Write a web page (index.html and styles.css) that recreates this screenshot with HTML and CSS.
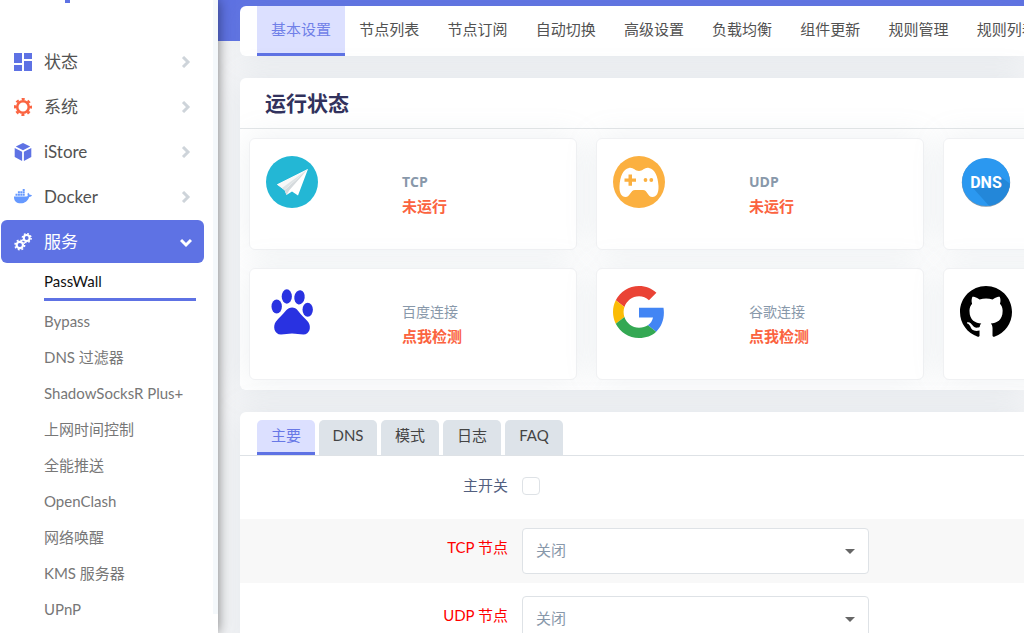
FILE: index.html
```html
<!DOCTYPE html>
<html lang="zh-CN">
<head>
<meta charset="utf-8">
<meta name="viewport" content="width=device-width, initial-scale=1">
<title>PassWall</title>
<link rel="stylesheet" href="styles.css">
</head>
<body>
<div class="app">
  <aside class="sidebar">
    <div class="brand"><span class="brand-mark"></span></div>
    <nav class="menu">
      <a class="menu-item" href="#">
        <svg class="menu-icon" viewBox="0 0 18 18" fill="#5e72e4"><path d="M0 0h8v10H0zM10 0h8v6h-8zM0 12h8v6H0zM10 8h8v10h-8z"/></svg>
        <span>状态</span>
        <svg class="arrow" viewBox="0 0 12 12"><path d="M3 1l5 5-5 5"/></svg>
      </a>
      <a class="menu-item" href="#">
        <svg class="menu-icon" viewBox="0 0 18 18" fill="none" stroke="#fb6340"><circle cx="9" cy="9" r="5.8" stroke-width="2.6"/><circle cx="9" cy="9" r="7.9" stroke-width="2.2" stroke-dasharray="3.1 3.1" stroke-dashoffset="1.55"/></svg>
        <span>系统</span>
        <svg class="arrow" viewBox="0 0 12 12"><path d="M3 1l5 5-5 5"/></svg>
      </a>
      <a class="menu-item" href="#">
        <svg class="menu-icon" viewBox="0 0 18 18" fill="#5e72e4"><path d="M9 0l7.2 3.6L9 7.2 1.8 3.6zM.7 5l7.4 3.8V18L.7 14zM17.300 5L9.900 8.800V18l7.400-4z"/></svg>
        <span>iStore</span>
        <svg class="arrow" viewBox="0 0 12 12"><path d="M3 1l5 5-5 5"/></svg>
      </a>
      <a class="menu-item" href="#">
        <svg class="menu-icon" viewBox="0 0 18 18" fill="#6699ff"><path d="M0 8.500h12.300c.8 0 1.300-.2 1.600-.5-.6-1.100-.5-2.300.2-3.200.9.500 1.400 1.200 1.500 2 .9-.2 1.800 0 2.400.5-.5 1.200-1.500 1.700-2.800 1.700C13.700 13 11 15.300 6.700 15.300 2.200 15.300-.2 13 0 8.500z"/><path d="M1.500 5.700h2v2h-2zM3.900 5.700h2v2h-2zM6.300 5.700h2v2h-2zM8.700 5.700h2v2h-2zM3.900 3.300h2v2h-2zM6.300 3.300h2v2h-2zM8.700 3.300h2v2h-2zM8.700 1h2v2h-2z"/></svg>
        <span>Docker</span>
        <svg class="arrow" viewBox="0 0 12 12"><path d="M3 1l5 5-5 5"/></svg>
      </a>
      <a class="menu-item menu-item-open" href="#">
        <svg class="menu-icon" viewBox="0 0 18 18" fill="none" stroke="#fff"><circle cx="5.800" cy="12" r="3.200" stroke-width="2.200"/><circle cx="5.800" cy="12" r="4.800" stroke-width="1.600" stroke-dasharray="1.900 1.870"/><circle cx="12.700" cy="5" r="2.900" stroke-width="2"/><circle cx="12.700" cy="5" r="4.400" stroke-width="1.500" stroke-dasharray="1.700 1.756"/></svg>
        <span>服务</span>
        <svg class="arrow" viewBox="0 0 12 12"><path d="M1 4l5 5 5-5"/></svg>
      </a>
      <ul class="submenu">
        <li><a class="current" href="#">PassWall</a></li>
        <li><a href="#">Bypass</a></li>
        <li><a href="#">DNS 过滤器</a></li>
        <li><a href="#">ShadowSocksR Plus+</a></li>
        <li><a href="#">上网时间控制</a></li>
        <li><a href="#">全能推送</a></li>
        <li><a href="#">OpenClash</a></li>
        <li><a href="#">网络唤醒</a></li>
        <li><a href="#">KMS 服务器</a></li>
        <li><a href="#">UPnP</a></li>
      </ul>
    </nav>
  </aside>

  <main class="main">
    <nav class="tabs">
      <a class="tab tab-active" href="#">基本设置</a>
      <a class="tab" href="#">节点列表</a>
      <a class="tab" href="#">节点订阅</a>
      <a class="tab" href="#">自动切换</a>
      <a class="tab" href="#">高级设置</a>
      <a class="tab" href="#">负载均衡</a>
      <a class="tab" href="#">组件更新</a>
      <a class="tab" href="#">规则管理</a>
      <a class="tab" href="#">规则列表</a>
    </nav>

    <section class="panel">
      <h3 class="panel-title">运行状态</h3>
      <div class="cards">
        <div class="card">
          <svg class="card-icon" viewBox="0 0 52 52"><circle cx="26" cy="26" r="26" fill="#23b7d5"/><path d="M42 13L11 28.500l7.500 5.500 2 5 5.500-3.500 6 4z" fill="#fff"/><path d="M42 13L18.500 34l2 5 3-5z" fill="#d5dadd"/><path d="M42 13L11 28.500l7.500 5.500z" fill="#f8f8f8"/><path d="M42 13L16 32l2.500 2z" fill="#dfe4e6"/></svg>
          <div class="card-text"><h4>TCP</h4><p>未运行</p></div>
        </div>
        <div class="card">
          <svg class="card-icon" viewBox="0 0 52 52"><circle cx="26" cy="26" r="26" fill="#fbb040"/><path d="M16 12c4-1 6 3 10 3s6-4 10-3c6 1 9 9 9.500 18 .3 7-2 11-6 11-5 0-5-7-9.500-7h-8c-4.500 0-5 7-9.500 7-4 0-6.300-4-6-11C7 21 10 13 16 12z" fill="#fff"/><path d="M15.500 18.500h3.500v4h4v3.300h-4v4h-3.500v-4h-4v-3.300h4z" fill="#fbb040"/><circle cx="32.500" cy="24" r="1.900" fill="#fbb040"/><circle cx="38.300" cy="24" r="1.900" fill="#fbb040"/></svg>
          <div class="card-text"><h4>UDP</h4><p>未运行</p></div>
        </div>
        <div class="card">
          <svg class="card-icon" viewBox="0 0 52 52"><defs><clipPath id="disc"><circle cx="26" cy="26" r="24"/></clipPath></defs><circle cx="26" cy="26.600" r="24.200" fill="#8598a8"/><circle cx="26" cy="26" r="24" fill="#2b98f0"/><path d="M13 32l18 20h22V30L40 20l-10 12z" fill="#2387d9" clip-path="url(#disc)"/><text x="26" y="32" text-anchor="middle" class="dns-text">DNS</text></svg>
        </div>
        <div class="card">
          <svg class="card-icon" viewBox="0 0 52 52" fill="#2932e1"><ellipse cx="10.700" cy="20.500" rx="5.200" ry="7"/><ellipse cx="20.800" cy="10.500" rx="5.100" ry="7.200"/><ellipse cx="33.500" cy="11.300" rx="5.200" ry="7.200" transform="rotate(8 33.500 11.300)"/><ellipse cx="41.700" cy="23.700" rx="5.200" ry="7"/><path d="M20 24.500c3.500-4 9-4 12 .3 3.500 5 7 7 10.200 11.200 3.500 5 1.300 12.500-4.700 12.500-4.500 0-7-1-11.500-1s-6.500 1-11 1C8 48.500 6.500 40 10 35.500c3-3.800 6.500-6.500 10-11z"/></svg>
          <div class="card-text"><h4 class="site-name">百度连接</h4><p>点我检测</p></div>
        </div>
        <div class="card">
          <svg class="card-icon" viewBox="0 0 48 48"><path fill="#EA4335" d="M24 9.500c3.540 0 6.710 1.220 9.210 3.600l6.850-6.850C35.900 2.380 30.470 0 24 0 14.620 0 6.510 5.380 2.560 13.220l7.980 6.190C12.430 13.720 17.740 9.500 24 9.500z"/><path fill="#4285F4" d="M46.980 24.550c0-1.570-.15-3.090-.38-4.550H24v9.020h12.940c-.58 2.960-2.260 5.480-4.780 7.180l7.730 6c4.510-4.180 7.090-10.360 7.090-17.650z"/><path fill="#FBBC05" d="M10.530 28.590c-.48-1.450-.76-2.990-.76-4.590s.27-3.140.76-4.590l-7.980-6.190C.92 16.460 0 20.120 0 24c0 3.880.92 7.540 2.560 10.780l7.970-6.190z"/><path fill="#34A853" d="M24 48c6.480 0 11.930-2.130 15.890-5.810l-7.730-6c-2.150 1.450-4.920 2.300-8.160 2.300-6.260 0-11.570-4.220-13.470-9.910l-7.980 6.190C6.510 42.620 14.620 48 24 48z"/></svg>
          <div class="card-text"><h4 class="site-name">谷歌连接</h4><p>点我检测</p></div>
        </div>
        <div class="card">
          <svg class="card-icon" viewBox="0 0 16 16"><path d="M8 0C3.580 0 0 3.580 0 8c0 3.540 2.290 6.530 5.470 7.590.4.070.55-.17.55-.38 0-.19-.01-.82-.01-1.490-2.010.37-2.530-.49-2.690-.94-.09-.23-.48-.94-.82-1.130-.28-.15-.68-.52-.01-.53.63-.01 1.080.58 1.230.82.72 1.210 1.870.87 2.330.66.07-.52.28-.87.51-1.070-1.780-.2-3.640-.89-3.640-3.950 0-.87.31-1.590.82-2.150-.08-.2-.36-1.020.08-2.120 0 0 .67-.21 2.200.82.64-.18 1.320-.27 2-.27s1.360.09 2 .27c1.530-1.040 2.200-.82 2.200-.82.44 1.100.16 1.920.08 2.120.51.56.82 1.270.82 2.150 0 3.070-1.870 3.750-3.650 3.950.29.25.54.73.54 1.480 0 1.070-.01 1.930-.01 2.200 0 .21.15.46.55.38A8.010 8.010 0 0 0 16 8c0-4.420-3.580-8-8-8z"/></svg>
        </div>
      </div>
    </section>

    <section class="panel settings">
      <div class="subtabs">
        <button class="subtab subtab-active" type="button">主要</button>
        <button class="subtab" type="button">DNS</button>
        <button class="subtab" type="button">模式</button>
        <button class="subtab" type="button">日志</button>
        <button class="subtab" type="button">FAQ</button>
      </div>
      <form class="form">
        <div class="row row-switch">
          <label class="label" for="enabled">主开关</label>
          <input class="check" type="checkbox" id="enabled">
        </div>
        <div class="row row-alt">
          <label class="label label-red" for="tcp">TCP 节点</label>
          <select class="select" id="tcp"><option>关闭</option></select>
        </div>
        <div class="row">
          <label class="label label-red" for="udp">UDP 节点</label>
          <select class="select" id="udp"><option>关闭</option></select>
        </div>
      </form>
    </section>
  </main>
</div>
</body>
</html>
```
FILE: styles.css
```css
* { box-sizing: border-box; }

body {
  margin: 0;
  height: 100vh;
  overflow: hidden;
  background: #f4f5f7;
  color: #525f7f;
  font: 15px/24px Lato, "Noto Sans CJK SC", sans-serif;
}

a { color: inherit; text-decoration: none; }

.app { display: flex; height: 100%; }

/* Sidebar */
.sidebar {
  position: relative;
  z-index: 2;
  flex: 0 0 218px;
  overflow: hidden;
  background: linear-gradient(#f4f8fb, #f4f8fb) right top / 5px 614px no-repeat #fff;
  box-shadow: 0 0 12px rgba(0, 0, 0, 0.5);
}

.brand { height: 40px; padding-left: 65px; }
.brand-mark { display: block; width: 5px; height: 3px; background: #5e72e4; }

.menu { padding: 0 14px 0 1px; }

.menu-item {
  display: flex;
  align-items: center;
  gap: 12px;
  height: 43px;
  margin-bottom: 2px;
  padding: 0 12px 0 13px;
  border-radius: 6px;
  color: #525252;
  font-size: 17px;
}

.menu-item-open { background: #5e72e4; color: #fff; }

.menu-icon { width: 18px; height: 18px; }

.arrow {
  width: 12px;
  height: 12px;
  margin-left: auto;
  fill: none;
  stroke: #ced4da;
  stroke-width: 3;
}
.menu-item-open .arrow { stroke: #fff; }

.submenu {
  margin: 0;
  padding: 0 8px 0 43px;
  list-style: none;
  color: #777;
}
.submenu a { display: block; line-height: 36px; }
.submenu .current {
  margin-bottom: 2px;
  border-bottom: 3px solid #5e72e4;
  color: #111;
  line-height: 33px;
}

/* Main area */
.main {
  flex: 1;
  display: flex;
  flex-direction: column;
  gap: 22px;
  min-width: 0;
  padding: 6px 0 0 22px;
  overflow: hidden;
  background: linear-gradient(#5e72e4, #5e72e4) top / 100% 41px no-repeat;
}

.tabs,
.panel {
  flex: none;
  overflow: hidden;
  border-radius: 6px 0 0 6px;
  background: #fff;
  box-shadow: 0 0 32px rgba(136, 152, 170, 0.15);
}

.tabs { display: flex; padding-left: 17px; }

.tab {
  flex: 0 0 11.5%;
  height: 50px;
  border-bottom: 3px solid transparent;
  color: #525252;
  line-height: 47px;
  text-align: center;
  white-space: nowrap;
}
.tab-active { border-color: #5e72e4; background: #dce0ff; color: #7080e8; }

.panel-title {
  margin: 0;
  padding-left: 25px;
  border-bottom: 1px solid #e3e6e8;
  color: #32325d;
  font-size: 21px;
  line-height: 50px;
}

.cards {
  display: grid;
  grid-template-columns: repeat(3, 328px);
  gap: 18px 19px;
  padding: 9px 9px 10px;
}

.card {
  display: flex;
  gap: 84px;
  height: 112px;
  padding: 17px 16px;
  border: 1px solid #f0f1f3;
  border-radius: 6px;
  background: #fff;
  box-shadow: 0 0 32px rgba(136, 152, 170, 0.15);
}

.card-icon { width: 52px; height: 52px; }

.card-text { padding-top: 13px; line-height: 25px; }
.card-text h4 {
  margin: 0;
  color: #8898aa;
  font: 700 14px/25px "Open Sans", "Noto Sans CJK SC", sans-serif;
}
.card-text .site-name { font-weight: 400; }
.card-text p { margin: 0; color: #fb6340; font-size: 15px; font-weight: 700; }

.dns-text { fill: #fff; font: 700 16px Roboto, sans-serif; }

/* Settings form */
.subtabs {
  display: flex;
  gap: 4px;
  padding: 8px 17px 0;
  border-bottom: 1px solid #dee2e6;
}

.subtab {
  width: 58px;
  height: 35px;
  padding: 0 0 2px;
  border: 0;
  border-bottom: 3px solid transparent;
  border-radius: 5px 5px 0 0;
  background: #dde3e9;
  color: #444;
  font: inherit;
}
.subtab-active { border-color: #5e72e4; background: #dce0ff; color: #6878e6; }

.row {
  display: grid;
  grid-template-columns: 268px 347px;
  gap: 14px;
  margin-bottom: 4px;
  padding: 9px 0;
}
.row-switch { margin: 0; padding: 18px 0 21px; }
.row-alt { background: #f8f8f8; }

.label { text-align: right; line-height: 38px; }
.row-switch .label { line-height: 22px; padding-bottom: 2px; }
.label-red { color: #f00; }

.check {
  appearance: none;
  width: 18px;
  height: 18px;
  margin: 3px 0 0;
  border: 1px solid #dee2e6;
  border-radius: 4px;
  background: #fff;
}

.select {
  appearance: none;
  height: 46px;
  padding: 0 13px 2px;
  border: 1px solid #dee2e6;
  border-radius: 4px;
  background: url("data:image/svg+xml,%3Csvg xmlns='http://www.w3.org/2000/svg' viewBox='0 0 10 5'%3E%3Cpath d='M0 0h10L5 5z' fill='%23666'/%3E%3C/svg%3E") right 13px center / 10px 5px no-repeat #fff;
  color: #8898aa;
  font: inherit;
}
```
